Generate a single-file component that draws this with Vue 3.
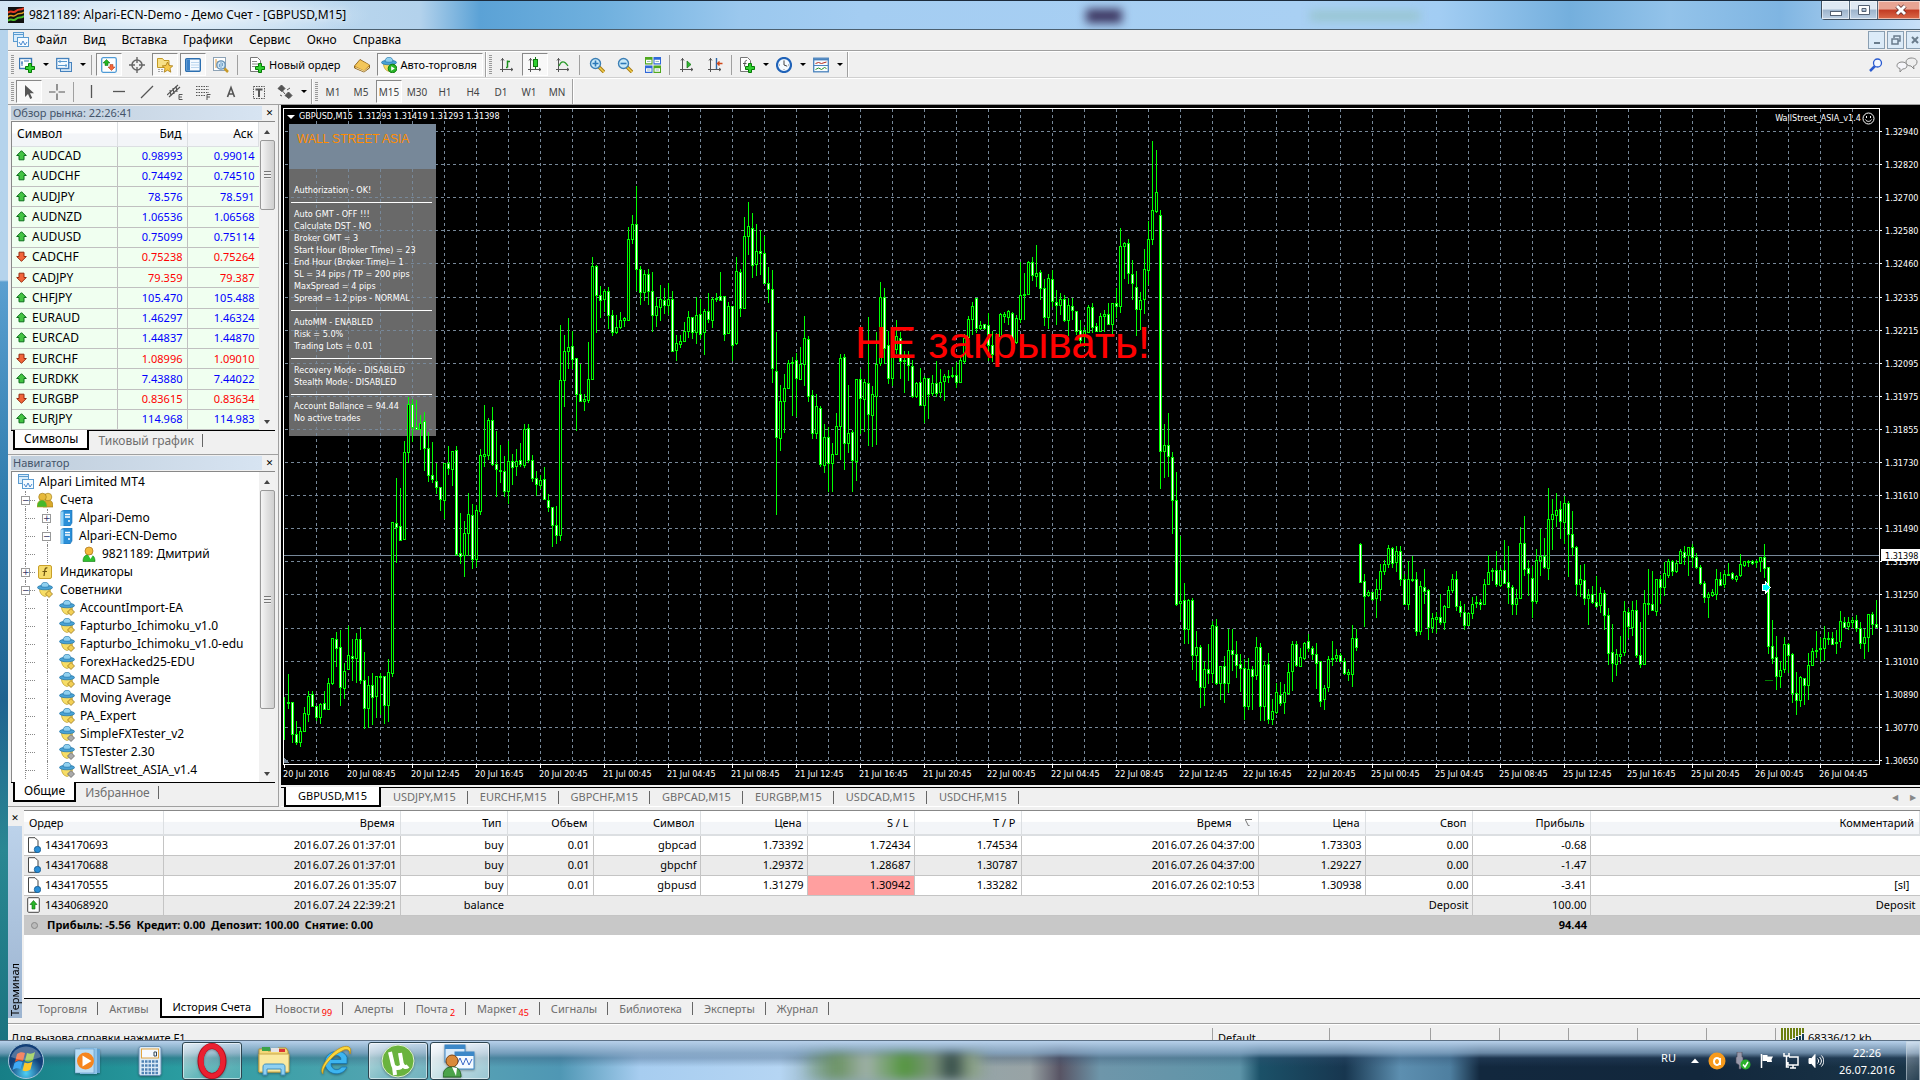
<script setup>
const menu = ['Файл', 'Вид', 'Вставка', 'Графики', 'Сервис', 'Окно', 'Справка']

const plus = '<path d="M9.500 6.500h3v3h3v3h-3v3h-3v-3h-3v-3h3z" fill="#2fd02f" stroke="#067a06"/>'
const axes = '<path d="M3.500 1v14M1 12.500h13M2 3.500l1.500-2 1.500 2M12 11l2 1.500-2 1.500" fill="none" stroke="#555"/>'
const lens = '<path d="M10 10l5 5" stroke="#a87b12" stroke-width="3.500"/><path d="M10 10l5 5" stroke="#f2cf4e" stroke-width="1.500"/><circle cx="6.500" cy="6.500" r="5" fill="#c9e9f8" stroke="#3c7fb5" stroke-width="1.400"/>'
const sheet = '<path d="M1.500.5h7l3 3v11h-10z" fill="#fff" stroke="#777"/>'
const hat = '<path d="M2.500 6.500c0 4.500 2 7 5.500 8 3.500-1 5.500-3.500 5.500-8z" fill="#f7dd66" stroke="#b99a28" stroke-width=".7"/><ellipse cx="8" cy="5.500" rx="7.600" ry="2.300" fill="#4aa3d6" stroke="#2374a8" stroke-width=".7"/><path d="M4 4.500C4-1.200 12-1.200 12 4.500c-2 1-6 1-8 0z" fill="#8fd0f0" stroke="#2374a8" stroke-width=".7"/>'
const icons = {
  app: '<rect width="16" height="16" fill="#111"/><path d="M0 6c3-4 5 1 8-2s5 0 8-3" stroke="#e33a22" stroke-width="2" fill="none"/><path d="M0 10c3-4 5 1 8-2s5 0 8-3" stroke="#d99b20" stroke-width="1.500" fill="none"/><path d="M0 14c3-4 5 1 8-2s5 0 8-3" stroke="#4cbf2a" stroke-width="2" fill="none"/>',
  charts: '<rect x=".5" y=".5" width="10" height="9" fill="#d8ecfb" stroke="#5b9bd0"/><path d="M0 2.500h11" stroke="#5b9bd0"/><rect x="4.500" y="5.500" width="11" height="9" fill="#f6fbff" stroke="#5b9bd0"/><path d="M6 10l2 3 2-4 2 4 2-3" stroke="#4a8ad0" fill="none"/>',
  newChart: '<rect x=".5" y="1.500" width="12" height="10" fill="#fff" stroke="#3c78b4" stroke-width="1.400"/><path d="M3 4v5M2 6h2M5 4h5" stroke="#3c78b4"/>' + plus,
  profiles: '<rect x="4.500" y="5.500" width="11" height="9" fill="#cfe4f6" stroke="#4682bd"/><rect x=".7" y="1.500" width="12" height="10" fill="#f4faff" stroke="#4682bd" stroke-width="1.300"/><path d="M2 4.500h9M2 8.500h9M4 3v3M10 7v3" stroke="#5b9bd0"/>',
  market: '<rect x=".7" y=".7" width="14.600" height="14.600" rx="1.500" fill="#fff" stroke="#4f9bd6" stroke-width="1.300"/><path d="M5.500 2.500l3.500 3.500H7v2.500H4V6H2z" fill="#25b525" stroke="#0b6b0b" stroke-width=".5"/><path d="M10.500 13.500L7 10h2V7.500h3V10h2z" fill="#f4683a" stroke="#a53214" stroke-width=".5"/>',
  cross: '<circle cx="8" cy="8" r="5" fill="none" stroke="#666" stroke-width="1.500"/><path d="M8 0v6M8 10v6M0 8h6M10 8h6" stroke="#666" stroke-width="1.400"/>',
  folder: '<path d="M.5 1.500h5l1.500 2h5v7H.5z" fill="#f7e087" stroke="#c39a25"/><path d="M2 12v3M5 12v3" stroke="#555" stroke-dasharray="1 1"/><path d="M10.500 5l1.600 3.500 3.700.4-2.800 2.500.8 3.800-3.300-2-3.300 2 .8-3.800-2.800-2.500 3.700-.4z" fill="#f7c94b" stroke="#a87b12" stroke-width=".8"/>',
  terminal: '<rect x=".7" y="1.700" width="14.600" height="12.600" rx="1" fill="#f4faff" stroke="#2c6fb0" stroke-width="1.400"/><rect x="1.400" y="2.400" width="3.600" height="11.200" fill="#3c82c8"/><path d="M6 5.500h8M6 8h8M6 10.500h8" stroke="#bbd6ee"/>',
  tester: '<rect x=".5" y=".5" width="12" height="13" fill="#fff" stroke="#8da2b5"/><path d="M3 2v9M5 4v6" stroke="#e09a3a"/><path d="M11 11l4 4" stroke="#c89a28" stroke-width="2.500"/><circle cx="8" cy="8" r="4.200" fill="#cfe6f7" stroke="#6590b5" stroke-width="1.300"/><path d="M8 5v6M6.500 7v3M9.500 6v3" stroke="#7aa6c9"/>',
  order: sheet + '<path d="M3 4.500h5M3 7h6M3 9.500h3" stroke="#888"/>' + plus,
  editor: '<path d="M.5 9L6 2.500 15.500 8v3L10 15 .5 11z" fill="#b9811b" stroke="#80540a" stroke-width=".8"/><path d="M1 9L6 3l9.300 5L10 13.500z" fill="#f3c65a"/><path d="M1.500 10.500l8.500 3.800 5-4.300" stroke="#fff5cf" fill="none" stroke-width=".8"/>',
  auto: hat + '<circle cx="11.500" cy="11.500" r="4.300" fill="#28b428" stroke="#0d7a0d"/><path d="M10.200 9.200v4.600l3.600-2.300z" fill="#fff"/>',
  bars: axes + '<path d="M7 10.500h1.500M8.500 10.500V3.500M8.500 4.500H11" stroke="#1b8f1b" stroke-width="1.500" fill="none"/>',
  candle: axes + '<path d="M8.500 0v12" stroke="#107810"/><rect x="6.500" y="2.500" width="4" height="7" fill="#2fce2f" stroke="#107810"/>',
  line: axes + '<path d="M4 9c2-5 5-6 9 0" stroke="#2a9a2a" stroke-width="1.300" fill="none"/>',
  zoomIn: lens + '<path d="M3.500 6.500h6M6.500 3.500v6" stroke="#2b78b8" stroke-width="1.600"/>',
  zoomOut: lens + '<path d="M3.500 6.500h6" stroke="#2b78b8" stroke-width="1.600"/>',
  tile: '<rect width="7.500" height="7.500" fill="#4fa81e"/><rect x="8.500" width="7.500" height="7.500" fill="#2f68d8"/><rect y="8.500" width="7.500" height="7.500" fill="#2f68d8"/><rect x="8.500" y="8.500" width="7.500" height="7.500" fill="#4fa81e"/><path d="M1 4.500h5.500M9.500 4.500H15M1 13h5.500M9.500 13H15" stroke="#fff" stroke-width="3.500"/><path d="M2 4.500h3.500M10.500 4.500H14M2 13h3.500M10.500 13H14" stroke="#9bb"/>',
  scroll: axes + '<path d="M8 4v7l4-3.500z" fill="#2fb82f" stroke="#147014" stroke-width=".7"/>',
  shift: axes + '<path d="M9.500 1v11" stroke="#2c66a8" stroke-width="1.400"/><path d="M15.500 6.500h-5M12.500 4.500l-2 2 2 2" stroke="#d04818" stroke-width="1.400" fill="none"/>',
  indicator: sheet + '<path d="M8 3.500c-2-.5-2 1-2.500 6M4 6.500h3.500" stroke="#555" fill="none"/>' + plus,
  clock: '<circle cx="8" cy="8" r="7" fill="#f4faff" stroke="#1f62b8" stroke-width="2.200"/><path d="M8 3.800V8l3.200 1.200" stroke="#444" fill="none"/><path d="M8 2.800v1M8 12v1M3 8h1M12 8h1" stroke="#888"/>',
  template: '<rect x=".7" y="1.200" width="14.600" height="13.600" fill="#f8fcff" stroke="#4a83bd" stroke-width="1.300"/><path d="M1 2.500h14" stroke="#4a83bd" stroke-width="1.800"/><path d="M1 8.500h14" stroke="#4a83bd"/><path d="M2.500 6.500l3-1 3 1 5-1.500" stroke="#b52c1c" fill="none"/><path d="M2.500 12.500l3-1.500 3 1.500 3-2 2 1" stroke="#2a922a" fill="none"/>',
  cursor: '<path d="M4 1v12l3-3 2.200 5 2-1-2.200-4.700h4z" fill="#555"/>',
  crosshair: '<path d="M8 0v6.500M8 9.500V16M0 8h6.500M9.500 8H16" stroke="#555" stroke-width="1.200"/>',
  vline: '<path d="M8.500 1v13" stroke="#555" stroke-width="1.300"/>',
  hline: '<path d="M2 7.500h12" stroke="#555" stroke-width="1.300"/>',
  trend: '<path d="M2 14L14 2" stroke="#555" stroke-width="1.300"/>',
  channel: '<path d="M0 11L11 1M2 13L13 3M3 6l1 6M6 4l1 6M9 2l1 6" stroke="#555" stroke-width="1.200"/><path d="M15.500 10.500H12v5h3.500M12 13h3" stroke="#555" fill="none"/>',
  fibo: '<path d="M1 2.500h13M1 5.500h13M1 8.500h13M1 11.500h9" stroke="#555" stroke-dasharray="1.500 1"/><path d="M15.500 10.500H12V16M12 13h3" stroke="#555" fill="none"/>',
  text: '<path d="M4.500 13L8 3.500l3.500 9.500M5.500 10h5" stroke="#555" stroke-width="1.600" fill="none"/>',
  label: '<rect x="2.500" y="2.500" width="11" height="12" fill="none" stroke="#555" stroke-dasharray="1.500 1"/><path d="M4.500 5.500h7M8 5.500V13" stroke="#555" stroke-width="2"/>',
  shapes: '<path d="M4.500 1L8 4.500l-3 3L1 4.500zM3 4l5 6M11.500 8l3.500 3.500-3 3L8 11.500z" fill="#555" stroke="#555"/><path d="M10 6l3-2M3 11l2 1" stroke="#555"/>',
  search: '<path d="M7 9l-5 5" stroke="#2a5bd0" stroke-width="2.500"/><circle cx="9.500" cy="6" r="4" fill="#f4f8ff" stroke="#2a5bd0" stroke-width="1.300"/>',
  chat: '<path d="M15 1c4 0 6 1.600 6 4s-2 4-3.500 4l.5 3-3-3c-3.500 0-5-2-5-4s2-4 5-4z" fill="#eee" stroke="#888"/><path d="M6 5c3 0 5 1.500 5 3.700S9 12 6.500 12L4 15v-3.500C2 11 1 10 1 8.700 1 6.500 3 5 6 5z" fill="#f6f6fa" stroke="#888"/>',
  up: '<path d="M5.500.7l4.800 4.800H8v4.300H3V5.500H.7z" fill="#43c443" stroke="#0c6e1c"/>',
  down: '<path d="M5.500 10.300L.7 5.500H3V1.200h5v4.300h2.300z" fill="#f2663a" stroke="#962a10"/>',
  accounts: '<path d="M6 15c0-4 1-7 5-7s5 3 5 7z" fill="#d9a92a" stroke="#9b7310" stroke-width=".6"/><circle cx="11" cy="5" r="3.800" fill="#f0cb55" stroke="#9b7310" stroke-width=".6"/><circle cx="5.500" cy="5" r="3.800" fill="#e6b93a" stroke="#9b7310" stroke-width=".6"/><path d="M0 15c0-4 2-7 5-7s5 3 5 7z" fill="#46b82a" stroke="#c49a20" stroke-width=".6"/>',
  server: '<path d="M3 1.500L6 0h8v13l-2 3H3z" fill="#2b8fd8" stroke="#1a6cb0" stroke-width=".6"/><path d="M3 1.500h2.500V16H3z" fill="#8ed1f8"/><path d="M7 4.500h5M7 7h5" stroke="#fff" stroke-width="1.300"/><circle cx="11" cy="11" r="1" fill="#fff"/>',
  user: '<path d="M2 15.500C2 11 4 8.500 8 8.500s6 2.500 6 7z" fill="#2fc02f" stroke="#0c7a0c" stroke-width=".6"/><path d="M7 8.500l2.500 4.500L12 9z" fill="#fff"/><circle cx="8" cy="5" r="4" fill="#f3b93c" stroke="#a8701a" stroke-width=".7"/>',
  func: '<rect x="1.500" y="1.500" width="13" height="13" rx="1.500" fill="#f6dc6d" stroke="#c9a02a"/><path d="M10.500 4c-3-1-2.500 2-3.500 8M5.500 7.500H10" stroke="#6b5210" stroke-width="1.200" fill="none"/>',
  expert: hat + '<path d="M12 8.500l3.500 3.500-3.500 3.500L8.500 12z" fill="#f3cf55" stroke="#98761a" stroke-width=".8"/>',
  expertOff: hat + '<path d="M12 8.500l3.500 3.500-3.500 3.500L8.500 12z" fill="#aaa" stroke="#666" stroke-width=".8"/>',
  deal: '<path d="M1.500.7h6.500l3 3v11.600H1.500z" fill="#fff" stroke="#444"/><circle cx="10.500" cy="12.500" r="3.200" fill="#2a8fd8" stroke="#14588c" stroke-width=".8"/>',
  deposit: '<rect x=".7" y=".7" width="11.600" height="14.600" rx="1" fill="#fff" stroke="#444"/><path d="M6.500 3.500L10 7.500H8v4.500H5V7.500H3z" fill="#2ab52a" stroke="#0b6b0b" stroke-width=".6"/>',
}

const tools = [
  { k: 'newChart', d: 1 }, { k: 'profiles', d: 1 }, { sep: 1 },
  { k: 'market', on: 1 }, { k: 'cross' }, { k: 'folder', on: 1 }, { k: 'terminal', on: 1 }, { k: 'tester' }, { sep: 1 },
  { k: 'order', t: 'Новый ордер' }, { k: 'editor' }, { k: 'auto', t: 'Авто-торговля', on: 1 }, { grip: 1 },
  { k: 'bars' }, { k: 'candle', on: 1 }, { k: 'line' }, { sep: 1 },
  { k: 'zoomIn' }, { k: 'zoomOut' }, { k: 'tile' }, { sep: 1 },
  { k: 'scroll' }, { k: 'shift' }, { sep: 1 },
  { k: 'indicator', d: 1 }, { k: 'clock', d: 1 }, { k: 'template', d: 1 },
]
const drawTools = [
  { k: 'cursor', on: 1 }, { k: 'crosshair' }, { sep: 1 }, { k: 'vline' }, { k: 'hline' }, { k: 'trend' }, { k: 'channel' },
  { k: 'fibo' }, { k: 'text' }, { k: 'label' }, { k: 'shapes', d: 1 }, { grip: 1 },
]
const frames = ['M1', 'M5', 'M15', 'M30', 'H1', 'H4', 'D1', 'W1', 'MN']

const quotes = `AUDCAD 0.98993 0.99014 u;AUDCHF 0.74492 0.74510 u;AUDJPY 78.576 78.591 u;AUDNZD 1.06536 1.06568 u;AUDUSD 0.75099 0.75114 u;CADCHF 0.75238 0.75264 d;CADJPY 79.359 79.387 d;CHFJPY 105.470 105.488 u;EURAUD 1.46297 1.46324 u;EURCAD 1.44837 1.44870 u;EURCHF 1.08996 1.09010 d;EURDKK 7.43880 7.44022 u;EURGBP 0.83615 0.83634 d;EURJPY 114.968 114.983 u`
  .split(';').map((r) => { const [s, bid, ask, dir] = r.split(' '); return { s, bid, ask, up: dir === 'u' } })

const tree = [
  { l: 0, k: 'charts', t: 'Alpari Limited MT4' },
  { l: 1, k: 'accounts', t: 'Счета', b: '−' },
  { l: 2, k: 'server', t: 'Alpari-Demo', b: '+' },
  { l: 2, k: 'server', t: 'Alpari-ECN-Demo', b: '−' },
  { l: 3, k: 'user', t: '9821189: Дмитрий' },
  { l: 1, k: 'func', t: 'Индикаторы', b: '+' },
  { l: 1, k: 'expert', t: 'Советники', b: '−' },
  ...['AccountImport-EA', 'Fapturbo_Ichimoku_v1.0', 'Fapturbo_Ichimoku_v1.0-edu', 'ForexHacked25-EDU', 'MACD Sample', 'Moving Average', 'PA_Expert']
    .map((t) => ({ l: 2, k: 'expert', t })),
  ...['SimpleFXTester_v2', 'TSTester 2.30', 'WallStreet_ASIA_v1.4'].map((t) => ({ l: 2, k: 'expertOff', t })),
]

// Bars are "high,bodyTop,bodyBottom,low"; a trailing "-" marks a falling bar.
const lastWeek = `1357,1373,1426,1451 1304,1367,1371,1382 1367,1367,1440,1459- 1412,1441,1459,1464- 1424,1435,1459,1469 1380,1393,1433,1433 1342,1355,1395,1412 1342,1351,1377,1378- 1378,1378,1403,1410- 1371,1373,1402,1415 1342,1370,1385,1385- 1313,1325,1384,1384 1223,1223,1326,1328 1208,1225,1246,1286- 1204,1244,1335,1374- 1280,1298,1337,1360 1196,1262,1292,1292 1225,1264,1267,1317- 1212,1224,1267,1322 1198,1226,1319,1325- 1254,1319,1382,1428- 1310,1330,1381,1425 1302,1329,1356,1419- 1309,1309,1355,1403 1303,1309,1310,1395 1309,1309,1375,1415- 1270,1301,1374,1412 960,960,1303,1310 860,961,971,1050- 882,968,999,1001- 775,801,998,998 676,690,801,822 680,690,742,776- 682,742,748,748- 716,733,748,793 710,730,790,840- 755,790,852,865- 778,853,862,869- 826,865,880,893- 880,880,907,932- 826,826,908,950 786,826,836,851- 797,797,839,876 786,796,1032,1034- 938,1030,1037,1052- 957,985,1035,1082 893,941,985,1033 918,943,1044,1063- 921,932,1043,1058 793,807,933,940 694,805,808,832 723,727,806,816 698,727,828,830- 752,827,839,900- 785,840,844,869- 809,842,888,899- 775,821,888,916 804,821,833,872- 793,820,832,852 779,817,828,832- 736,748,829,833 737,746,818,822- 807,817,860,866- 842,860,872,897- 852,863,874,881 834,862,907,907- 895,908,925,935- 925,926,965,1014- 922,965,988,1006- 511,637,988,1000 535,571,637,695 495,561,571,608 525,560,588,608- 587,587,667,751- 600,667,684,685- 668,680,683,704 550,635,681,686 357,378,633,633 376,378,444,528- 423,444,454,492- 429,435,453,480 424,435,488,519- 478,489,528,533- 489,515,528,530 481,500,515,519 492,496,499,513 289,316,499,499 262,281,316,324 195,281,384,432- 377,384,437,463- 386,396,437,455 384,396,435,464- 391,434,489,524- 448,468,489,514 420,452,470,499 427,454,465,484- 415,452,466,487 434,452,570,570- 534,552,568,591 535,547,555,562 504,524,547,548 480,494,524,539 494,494,527,540- 448,489,528,552 453,487,532,541- 475,479,527,578 439,480,498,505- 447,453,499,516 438,449,452,457 391,446,455,455- 446,446,531,546- 460,467,530,530 467,467,556,591- 357,389,553,555 384,390,473,490- 266,308,473,473 232,287,308,350 257,290,374,403- 282,344,373,397 296,343,347,395- 309,348,417,417- 380,416,430,458- 387,430,610,640- 527,615,766,941- 647,683,767,795 623,655,683,755 590,597,655,655 584,595,598,715 576,590,632,719- 561,600,634,634 491,541,601,647 537,542,673,684- 659,671,757,767- 667,696,757,767 695,700,828,832-
736,766,830,845 743,766,824,888- 780,805,825,888 711,740,805,805 577,587,740,815 577,583,780,838- 648,757,780,801 750,755,818,888- 634,635,820,864 611,633,678,757- 635,640,680,752 493,642,714,783- 650,669,716,786 528,600,672,782 414,448,598,602 427,448,563,598- 526,557,632,642- 566,566,632,648 500,537,566,575 528,540,593,632- 570,590,592,664 570,585,603,636- 590,604,672,675- 641,643,672,676 608,641,692,692- 627,632,692,732 632,632,667,722- 625,644,666,670 594,643,665,672- 611,640,663,674 623,628,638,682 614,627,630,641 606,626,628,630 595,626,640,652- 585,590,640,641 531,540,592,597 491,497,539,545 459,468,498,532 450,450,517,528- 502,511,518,520 509,510,518,520- 485,512,557,590- 525,557,578,592- 530,536,580,590 485,486,536,540 482,487,490,505 478,480,492,508 482,485,548,552- 489,495,550,552 368,444,497,505 393,440,443,497 366,368,440,440 357,368,398,408- 330,394,399,422 386,392,428,452- 407,428,494,512- 395,405,493,517 387,407,457,467- 432,458,465,510- 439,452,465,487 444,452,500,502- 451,466,500,533 451,468,478,498- 479,480,524,532- 500,523,546,552- 515,524,535,560 465,471,527,528 462,470,515,527- 507,514,524,525- 485,490,524,524 477,486,490,524 461,487,508,509- 461,462,508,533 427,461,467,492- 290,332,468,482 323,325,332,404 315,325,394,415- 363,396,416,452- 389,424,476,533- 436,455,476,520 339,384,452,483 276,315,387,419 94,250,315,327 114,210,252,254 250,262,798,881- 736,784,797,856 711,784,810,854- 800,811,908,985- 845,908,1146,1147- 991,1138,1144,1180 1097,1137,1202,1235- 1135,1137,1202,1233 1132,1137,1262,1292- 1207,1242,1262,1317 1238,1242,1335,1379- 1276,1292,1335,1375 1236,1294,1302,1325- 1185,1192,1303,1322 1179,1196,1325,1327- 1286,1287,1325,1362 1264,1287,1326,1369- 1203,1249,1326,1345 1202,1249,1260,1296- 1229,1259,1283,1312- 1260,1282,1290,1342- 1270,1291,1378,1407- 1267,1294,1378,1384 1287,1293,1309,1384- 1220,1243,1306,1315 1234,1242,1378,1409- 1275,1283,1378,1409 1257,1282,1406,1416- 1362,1389,1406,1419 1325,1346,1390,1392 1323,1352,1371,1374- 1327,1346,1369,1393 1279,1299,1347,1350 1229,1236,1297,1340 1229,1236,1285,1287- 1246,1266,1286,1287 1232,1234,1267,1270 1213,1230,1246,1253- 1240,1246,1260,1270- 1235,1260,1280,1337- 1276,1276,1365,1377- 1329,1336,1362,1384 1263,1271,1333,1342 1230,1268,1271,1284 1248,1262,1268,1275 1256,1262,1274,1275- 1267,1275,1303,1305- 1294,1301,1304,1318 1193,1223,1305,1332 1202,1223,1242,1250-`
const thisWeek = `250,252,365,365- 343,362,407,497- 390,396,404,408 397,397,418,419- 357,388,413,470 311,332,388,420 300,312,332,343 254,265,313,322 261,265,308,320- 257,273,307,333 257,273,357,376- 343,356,431,431- 303,357,431,447 288,356,359,363- 336,357,512,525- 363,378,512,522 327,380,392,430- 388,390,500,537- 460,475,500,516 457,472,478,516 402,471,486,493- 436,438,487,507 379,391,440,441 342,357,391,397 334,357,438,451- 422,438,457,468- 432,456,496,508- 457,458,495,495 411,432,460,473 409,427,430,440 417,427,431,447- 357,373,431,432 286,337,371,371 324,331,333,360 273,331,373,379- 325,330,375,378 241,330,368,370- 257,367,382,429- 375,382,432,461- 388,415,433,461 201,249,415,415 168,249,327,345- 300,325,338,406- 319,354,422,470- 268,300,424,430 208,289,300,345 234,287,322,324- 85,178,323,357 117,163,178,267 100,151,165,197 123,147,184,235- 108,129,187,249 123,129,222,348- 153,222,262,285- 257,262,371,406- 316,358,373,409 312,360,414,432- 388,405,415,492 379,402,427,430- 348,427,437,440- 381,399,436,457 390,400,466,508- 443,466,580,611- 493,577,610,662- 568,583,612,644 527,583,587,608 424,454,577,584 443,455,499,532- 424,451,500,525 421,451,586,591- 485,586,611,620- 391,430,611,611 328,429,431,461 334,431,449,450- 357,358,453,464 344,358,382,430- 307,340,382,406 297,304,346,350 300,304,334,345- 300,309,334,336 268,274,310,310 257,276,290,311- 261,262,285,345 252,262,292,319- 280,291,321,325- 315,322,370,371- 363,370,412,426- 397,403,411,470 388,396,406,409 327,358,401,416 337,358,374,376- 331,342,373,382 309,342,345,345- 337,340,353,358- 345,349,357,362 282,313,346,348 303,304,315,318 300,302,305,318 301,303,308,312- 300,303,307,322 292,292,304,333 252,291,324,350- 322,322,559,579- 480,558,593,608- 528,591,647,686- 604,629,649,681 531,552,628,637 548,552,586,635- 579,583,700,726- 636,700,720,762- 648,651,720,738 654,655,676,732- 579,614,676,717 564,574,616,616 513,569,574,591 534,564,568,604 498,534,565,600 516,534,537,553- 516,535,553,553- 510,546,549,579 453,484,542,561 471,487,500,502- 471,487,499,506 471,481,487,501 465,481,505,513- 486,505,550,565- 506,532,550,594 462,463,532,573 456,462,493,522- 420,492,501,502-`
const scaleBars = (src, top, perPx) => src.trim().split(/\s+/).map((b) => {
  const y = b.replace('-', '').split(',').map((v) => Math.round(top + v / perPx))
  return { y, down: b.endsWith('-') }
})
const bars = [...scaleBars(lastWeek, -9, 2.2725), ...scaleBars(thisWeek, 351, 3)]
const wicks = bars.map(({ y }, i) => `M${i * 4}.5 ${y[0]}V${y[3] + 1}`).join('')
const body = ({ y }, i) => `M${i * 4 - 1}.5 ${y[1]}.5h2V${Math.max(y[2], y[1] + 1)}.5h-2z`
const rising = bars.map((b, i) => (b.down ? '' : body(b, i))).join('')
const falling = bars.map((b, i) => (b.down ? body(b, i) : '')).join('')

const rowsY = Array.from({ length: 20 }, (_, i) => Math.round(22 + i * 33.1))
const colsX = Array.from({ length: 80 }, (_, i) => 32 + i * 32)
const prices = ['1.32940', '1.32820', '1.32700', '1.32580', '1.32460', '1.32335', '1.32215', '1.32095', '1.31975', '1.31855', '1.31730', '1.31610', '1.31490', '1.31370', '1.31250', '1.31130', '1.31010', '1.30890', '1.30770', '1.30650']
const hours = ['00:45', '04:45', '08:45', '12:45', '16:45', '20:45']
const times = [
  '20 Jul 2016', ...hours.slice(2).map((h) => '20 Jul ' + h),
  ...['21', '22', '25'].flatMap((d) => hours.map((h) => `${d} Jul ${h}`)),
  '26 Jul 00:45', '26 Jul 04:45',
]
const info = ['Authorization - OK!', '', 'Auto GMT - OFF !!!', 'Calculate DST - NO', 'Broker GMT = 3', 'Start Hour (Broker Time) = 23', 'End Hour (Broker Time)= 1', 'SL = 34 pips / TP = 200 pips', 'MaxSpread = 4 pips', 'Spread = 1.2 pips - NORMAL', '', 'AutoMM - ENABLED', 'Risk = 5.0%', 'Trading Lots = 0.01', '', 'Recovery Mode - DISABLED', 'Stealth Mode - DISABLED', '', 'Account Ballance = 94.44', 'No active trades']
const chartTabs = ['GBPUSD', 'USDJPY', 'EURCHF', 'GBPCHF', 'GBPCAD', 'EURGBP', 'USDCAD', 'USDCHF']

const heads = ['Ордер', 'Время', 'Тип', 'Объем', 'Символ', 'Цена', 'S / L', 'T / P', 'Время', 'Цена', 'Своп', 'Прибыль', 'Комментарий']
const orders = [
  ['1434170693', '2016.07.26 01:37:01', 'buy', '0.01', 'gbpcad', '1.73392', '1.72434', '1.74534', '2016.07.26 04:37:00', '1.73303', '0.00', '-0.68', ''],
  ['1434170688', '2016.07.26 01:37:01', 'buy', '0.01', 'gbpchf', '1.29372', '1.28687', '1.30787', '2016.07.26 04:37:00', '1.29227', '0.00', '-1.47', ''],
  ['1434170555', '2016.07.26 01:35:07', 'buy', '0.01', 'gbpusd', '1.31279', '1.30942', '1.33282', '2016.07.26 02:10:53', '1.30938', '0.00', '-3.41', '[sl]'],
]
const termTabs = [
  { t: 'Торговля' }, { t: 'Активы', last: 1 }, { t: 'История Счета', on: 1 }, { t: 'Новости', n: 99 }, { t: 'Алерты' }, { t: 'Почта', n: 2 },
  { t: 'Маркет', n: 45 }, { t: 'Сигналы' }, { t: 'Библиотека' }, { t: 'Эксперты' }, { t: 'Журнал' },
]
</script>

<template>
  <div class="screen">
    <header class="title">
      <svg class="ico" viewBox="0 0 16 16" v-html="icons.app" />
      <span class="title-text">9821189: Alpari-ECN-Demo - Демо Счет - [GBPUSD,M15]</span>
      <i class="smudge dark" /><i class="smudge green" />
      <div class="winbtns">
        <button aria-label="Свернуть"><svg width="12" height="14"><rect x=".5" y="8.500" width="11" height="4" fill="#fff" stroke="#546173" /></svg></button>
        <button aria-label="Развернуть"><svg width="12" height="12"><path d="M.5 1.500h11v9H.5zM4 4.500h4v3H4z" fill="#fff" fill-rule="evenodd" stroke="#546173" /></svg></button>
        <button class="close" aria-label="Закрыть"><svg width="12" height="12"><path d="M2 2l8 8M10 2l-8 8" stroke="#5a2a2a" stroke-width="4.500" /><path d="M2 2l8 8M10 2l-8 8" stroke="#fff" stroke-width="3" /></svg></button>
      </div>
    </header>

    <div class="window">
      <nav class="menu">
        <svg class="ico" viewBox="0 0 16 16" v-html="icons.charts" />
        <button v-for="m in menu" :key="m">{{ m }}</button>
        <div class="mdi">
          <button aria-label="Свернуть окно"><svg width="10" height="10"><path d="M2 8h6" stroke="#6a7c8c" stroke-width="2" /></svg></button>
          <button aria-label="Восстановить окно"><svg width="10" height="10"><path d="M3 3V1h6v5H7M1 4h6v5H1z" fill="none" stroke="#6a7c8c" stroke-width="1.500" /></svg></button>
          <button aria-label="Закрыть окно"><svg width="10" height="10"><path d="M2 2l6 6M8 2L2 8" stroke="#6a7c8c" stroke-width="2" /></svg></button>
        </div>
      </nav>

      <div class="toolbar">
        <i class="grip" />
        <template v-for="(b, i) in tools" :key="i">
          <i v-if="b.sep" class="sep" />
          <template v-else-if="b.grip"><i class="edge" /><i class="grip" /></template>
          <button v-else class="tool" :class="{ on: b.on, drop: b.d, wide: b.t }">
            <svg class="ico" viewBox="0 0 16 16" v-html="icons[b.k]" /><span v-if="b.t">{{ b.t }}</span>
          </button>
        </template>
        <i class="edge" />
        <div class="right">
          <svg class="ico" viewBox="0 0 16 16" v-html="icons.search" />
          <svg class="chat" viewBox="0 0 22 16" v-html="icons.chat" />
        </div>
      </div>
      <div class="toolbar second">
        <i class="grip" />
        <template v-for="(b, i) in drawTools" :key="i">
          <i v-if="b.sep" class="sep" />
          <template v-else-if="b.grip"><i class="edge" /><i class="grip" /></template>
          <button v-else class="tool" :class="{ on: b.on, drop: b.d }"><svg class="ico" viewBox="0 0 16 16" v-html="icons[b.k]" /></button>
        </template>
        <button v-for="f in frames" :key="f" class="tool frame" :class="{ on: f === 'M15' }">{{ f }}</button>
        <i class="edge" />
      </div>

      <main class="main">
        <aside class="dock">
          <section class="pane quotes">
            <div class="caption"><h2>Обзор рынка: 22:26:41</h2><button aria-label="Закрыть обзор рынка">✕</button></div>
            <div class="box">
              <table>
                <thead><tr><th>Символ</th><th>Бид</th><th>Аск</th></tr></thead>
                <tbody>
                  <tr v-for="q in quotes" :key="q.s" :class="{ down: !q.up }">
                    <td><svg class="dir" viewBox="0 0 11 11" v-html="q.up ? icons.up : icons.down" />{{ q.s }}</td>
                    <td>{{ q.bid }}</td><td>{{ q.ask }}</td>
                  </tr>
                </tbody>
              </table>
              <div class="scroll"><i class="thumb" /></div>
            </div>
            <div class="tabs"><button class="on">Символы</button><button>Тиковый график</button></div>
          </section>
          <section class="pane nav">
            <div class="caption"><h2>Навигатор</h2><button aria-label="Закрыть навигатор">✕</button></div>
            <div class="box">
              <ul>
                <li v-for="n in tree" :key="n.t" :class="['l' + n.l]">
                  <i v-if="n.b" class="pm">{{ n.b }}</i><svg class="ico" viewBox="0 0 16 16" v-html="icons[n.k]" /><span>{{ n.t }}</span>
                </li>
              </ul>
              <div class="scroll"><i class="thumb long" /></div>
            </div>
            <div class="tabs"><button class="on">Общие</button><button>Избранное</button></div>
          </section>
        </aside>

        <section class="charts">
          <div class="chart">
            <div class="plot">
              <svg class="canvas" shape-rendering="crispEdges">
                <rect x="5" y="15" width="147" height="312" fill="#696969" />
                <g stroke="#778899" stroke-dasharray="3 3">
                  <line v-for="y in rowsY" :key="'h' + y" x1="1" :y1="y + 0.5" x2="100%" :y2="y + 0.5" />
                  <line v-for="x in colsX" :key="'v' + x" :x1="x + 0.5" y1="0" :x2="x + 0.5" y2="100%" />
                </g>
                <line x1="0" y1="446.500" x2="100%" y2="446.500" stroke="#778899" />
                <rect x="5" y="15" width="147" height="45" fill="#778899" />
                <path d="M0 648l5 6H0z" fill="#778899" />
                <path :d="wicks" stroke="#0f0" />
                <path :d="rising" fill="#000" stroke="#0f0" />
                <path :d="falling" fill="#fff" stroke="#0f0" />
                <path d="M1481 571.500h8" stroke="#008000" />
                <path d="M1478.500 475.500h3v-3l5 6-5 6v-3h-3z" fill="#0ff" stroke="#fff" />
              </svg>
              <p class="quote"><i />GBPUSD,M15&nbsp; 1.31293 1.31419 1.31293 1.31398</p>
              <p class="ea">WallStreet_ASIA_v1.4
                <svg width="13" height="13" viewBox="0 0 13 13" fill="none" stroke="#fff"><circle cx="6.500" cy="6.500" r="5.500" /><path d="M4.500 4v2M8.500 4v2M3.500 7.500c1 2.500 5 2.500 6 0" /></svg>
              </p>
              <div class="info">
                <h3>WALL STREET ASIA</h3>
                <p v-for="(t, i) in info" :key="i" :class="{ rule: !t }">{{ t }}</p>
              </div>
              <p class="warning">НЕ закрывать!</p>
            </div>
            <svg class="prices">
              <template v-for="(p, i) in prices" :key="p">
                <path :d="`M0 ${rowsY[i] + 1}.5h2`" stroke="#fff" /><text x="5" :y="rowsY[i] + 5">{{ p }}</text>
              </template>
              <rect x="1" y="441" width="39" height="12" fill="#fff" /><text x="5" y="451" class="bid">1.31398</text>
            </svg>
            <svg class="times">
              <template v-for="(t, i) in times" :key="t">
                <path :d="`M${i * 64 + 1}.5 0v3`" stroke="#fff" /><text :x="i * 64" y="12">{{ t }}</text>
              </template>
            </svg>
          </div>
          <div class="tabs chart-tabs">
            <button v-for="(t, i) in chartTabs" :key="t" :class="{ on: !i }">{{ t }},M15</button>
            <div class="arrows"><i>◀</i><i>▶</i></div>
          </div>
        </section>
      </main>

      <section class="terminal">
        <div class="strip"><button aria-label="Закрыть терминал">✕</button><span>Терминал</span></div>
        <div class="term-body">
          <div class="term-list">
            <table>
              <colgroup><col v-for="(h, i) in heads" :key="i" :class="'c' + i"></colgroup>
              <thead><tr><th v-for="(h, i) in heads" :key="i">{{ h }}<svg v-if="i === 8" width="9" height="8" fill="none" stroke="#777"><path d="M1 .5h7M1.500 1l3 6 1-1" /></svg></th></tr></thead>
              <tbody>
                <tr v-for="(o, r) in orders" :key="o[0]">
                  <td v-for="(c, i) in o" :key="i" :class="{ hit: r === 2 && i === 6 }">
                    <svg v-if="!i" class="doc" viewBox="0 0 14 16" v-html="icons.deal" />{{ c }}
                  </td>
                </tr>
                <tr>
                  <td><svg class="doc" viewBox="0 0 14 16" v-html="icons.deposit" />1434068920</td>
                  <td>2016.07.24 22:39:21</td><td class="open">balance</td>
                  <td colspan="8">Deposit</td><td>100.00</td><td class="flush">Deposit</td>
                </tr>
                <tr class="sum">
                  <td colspan="11"><i />Прибыль: -5.56&nbsp; Кредит: 0.00&nbsp; Депозит: 100.00&nbsp; Снятие: 0.00</td><td>94.44</td><td />
                </tr>
              </tbody>
            </table>
          </div>
          <div class="tabs term-tabs">
            <button v-for="t in termTabs" :key="t.t" :class="{ on: t.on, last: t.last }">{{ t.t }}<sub v-if="t.n">{{ t.n }}</sub></button>
          </div>
        </div>
      </section>

      <footer class="status">
        <span class="help">Для вызова справки нажмите F1</span>
        <span class="w1">Default</span><span class="w2" /><span class="w3" /><span class="w3" /><span class="w3" /><span class="w3" /><span class="w3" />
        <span class="net">
          <svg width="24" height="14"><path d="M1 14V0M4 14V0M7 12V0M10 11V0M13 10V0M16 8V0M19 7V0M22 5V0" stroke="#6b7f10" stroke-width="2" /><path d="M7 14v-1M10 14v-2M13 14v-3M16 14V9M19 14V8M22 14V6" stroke="#123c5a" stroke-width="2" /></svg>68336/12 kb
        </span>
      </footer>
    </div>

    <footer class="taskbar">
      <button class="start" aria-label="Пуск">
        <svg width="38" height="38" viewBox="0 0 38 38"><defs><radialGradient id="orb" cy=".85"><stop offset="0" stop-color="#4fd0f5" /><stop offset="1" stop-color="#123f78" /></radialGradient></defs>
          <circle cx="19" cy="19" r="17.500" fill="url(#orb)" stroke="#a8c6dc" /><path d="M10 12c3-2 5-2 8-1l-2 8c-3-1-5-1-8 1z" fill="#f0592a" /><path d="M20 11c3 1 5 1 8-1l-2 8c-3 2-5 2-8 1z" fill="#8cc63f" /><path d="M7.500 21c3-2 5-2 8-1l-2 7c-3-1-5-1-8 1z" fill="#3fa9f5" /><path d="M17.500 20.500c3 1 5 1 8-1l-2 8c-3 2-5 2-8 1z" fill="#fcc82c" /><path d="M4 15c5-14 25-14 30 0-9 4-21 4-30 0z" fill="#fff" opacity=".28" /></svg>
      </button>
      <button class="task" aria-label="Проигрыватель"><svg width="26" height="28" viewBox="0 0 26 28"><path d="M9 2h16v24H9z" fill="#5f9fcf" /><path d="M5 1h17v26H5z" fill="#8fc3e8" /><path d="M0 2h19v24H0z" fill="#b9dcf4" stroke="#5b95c4" stroke-width=".6" /><circle cx="10.500" cy="14" r="8.500" fill="#f5851f" /><path d="M7.500 8.500v11l9-5.500z" fill="#fff" /></svg></button>
      <button class="task" aria-label="Калькулятор"><svg width="24" height="30" viewBox="0 0 24 30"><rect x="1" y=".5" width="22" height="29" rx="2" fill="#dcebf7" stroke="#6a93b8" /><rect x="3.500" y="3" width="17" height="9" fill="#f6faff" stroke="#e3a540" /><path d="M16 6v4h2.500V6z" fill="none" stroke="#345" /><path d="M3.500 15.500h17M3.500 19.500h17M3.500 23.500h17M3.500 27h17" stroke="#4f82b4" stroke-width="2.500" stroke-dasharray="2.500 1" /></svg></button>
      <button class="task run" aria-label="Opera"><svg width="32" height="36" viewBox="0 0 32 36"><ellipse cx="16" cy="18" rx="11.500" ry="15" fill="none" stroke="#b00a1c" stroke-width="6" /><ellipse cx="16" cy="18" rx="11" ry="15" fill="none" stroke="#ea2030" stroke-width="5" /></svg></button>
      <button class="task" aria-label="Проводник"><svg width="34" height="30" viewBox="0 0 34 30"><path d="M2 3h7l2 2h10V2h8l2 3v21H2z" fill="#f3d778" stroke="#b9943a" /><path d="M5 1h8v4H5z" fill="#3aa34a" /><path d="M14 2h8v4h-8z" fill="#e4e4e4" /><path d="M22 3h6v3h-6z" fill="#d33" /><path d="M2 8h30v18H2z" fill="#fae9a0" stroke="#c9a84a" /><path d="M6 29v-8c0-2 1-3 3-3h16c2 0 3 1 3 3v8h-4v-6H10v6z" fill="#8fd0f2" stroke="#3f8fc0" /></svg></button>
      <button class="task" aria-label="Internet Explorer"><svg width="34" height="32" viewBox="0 0 34 32"><path d="M28 18.500H12c0 7 8 8 10.500 3.500H28C23 33 6 30 6 17.500S25 2.500 28 12.500zM12 14.500h10c0-5.500-9.500-5.500-10 0z" fill="#3db5f0" stroke="#1673ad" stroke-width=".8" /><path d="M4 29C-3 23 20-3 30 2c2 1 2 4 1 7 0-4-3-6-8-3C12 11 3 23 4 29z" fill="#fbd63c" stroke="#c08c10" stroke-width=".7" /></svg></button>
      <button class="task run" aria-label="uTorrent"><svg width="34" height="34" viewBox="0 0 34 34"><circle cx="17" cy="17" r="16" fill="#6ab33e" stroke="#dff0d0" /><path d="M9 8l3 13c1 4 8 4 9 0l-2-12M21 20c1 3 4 4 6 2M13 23l1 8" fill="none" stroke="#fff" stroke-width="4" /></svg></button>
      <button class="task run active" aria-label="MetaTrader"><svg width="34" height="34" viewBox="0 0 34 34"><rect x="2" y="1" width="20" height="17" fill="#d8ebfa" stroke="#3c88c8" /><path d="M2 3h20" stroke="#3c88c8" stroke-width="4" /><rect x="12" y="8" width="19" height="17" fill="#f4faff" stroke="#3c88c8" /><path d="M12 10h19" stroke="#3c88c8" stroke-width="4" /><path d="M14 20l3-6 3 7 3-7 3 7 3-6" fill="none" stroke="#3a68c8" /><circle cx="9" cy="17" r="6" fill="#d98a3a" stroke="#7a4210" /><path d="M0 33c0-7 3-10 9-10s9 3 9 10z" fill="#4ba34a" stroke="#2a6a2a" /><path d="M9 23l4 9 1-8z" fill="#fff" /></svg></button>
      <i class="leaf" />
      <div class="tray">
        <span class="lang">RU</span>
        <svg width="8" height="5"><path d="M0 5l4-4.500L8 5z" fill="#fff" /></svg>
        <svg width="18" height="18" viewBox="0 0 18 18"><circle cx="9" cy="9" r="8.500" fill="#f79a1c" /><path d="M12 6v7M12 9.500a3 3.500 0 1 1 0-.1" fill="none" stroke="#fff" stroke-width="2" /></svg>
        <svg width="16" height="18" viewBox="0 0 16 18"><path d="M2 0h5v5h1v7l-2 2v3H4v-4l-3-2V5h1z" fill="#99a" stroke="#445" stroke-width=".6" /><circle cx="10.500" cy="12.500" r="5" fill="#2bb02b" /><path d="M8 12.500l2 2.500 3-5" stroke="#fff" fill="none" stroke-width="1.500" /></svg>
        <svg width="14" height="16" viewBox="0 0 14 16"><path d="M1.500 1v14" stroke="#fff" stroke-width="1.500" /><path d="M2.500 2h5v1.500H13l-1.500 3L12 9H7V8H2.500z" fill="#fff" /></svg>
        <svg width="16" height="16" viewBox="0 0 16 16" fill="none" stroke="#fff" stroke-width="1.500"><path d="M6 4h9v8H5V9M7 15h6M10 12v3M1 0v3h5V0M3.500 3v11H6" /></svg>
        <svg width="16" height="16" viewBox="0 0 16 16" fill="none" stroke="#fff"><path d="M1 5.500h2.500L7 1.500v13l-3.500-4H1z" fill="#fff" /><path d="M9.500 5.500c1.500 1.500 1.500 3.500 0 5M11.500 4c2.500 2.500 2.500 5.500 0 8M13.500 2.500c3 3.500 3 7.500 0 11" /></svg>
        <div class="clock"><span>22:26</span><span>26.07.2016</span></div>
        <button class="peek" aria-label="Показать рабочий стол" />
      </div>
    </footer>
  </div>
</template>

<style>
body { margin: 0; overflow: hidden; }
</style>

<style scoped>
* { box-sizing: border-box; }
.screen { display: flex; flex-direction: column; height: 100vh; overflow: hidden; font: 11px/14px "Noto Sans", sans-serif; color: #000; background: linear-gradient(#b5d3ec 0, #b5d3ec 280px, #5b9fd0 282px, #2f7cad 500px, #1f6390 700px, #2a8792 850px, #17707c 100%); }
button { font: inherit; color: inherit; border: 0; background: none; padding: 0; }
h2, h3, p, ul { margin: 0; padding: 0; font-weight: normal; }
i { font-style: normal; }
.ico { width: 16px; height: 16px; flex: none; }

.title { position: relative; flex: none; display: flex; align-items: center; gap: 5px; height: 30px; padding-left: 8px; overflow: hidden; border-top: 1px solid #1c2b3c; border-bottom: 1px solid #4c6070; font-size: 12px;
  background: radial-gradient(ellipse 200px 30px at 170px 14px, #eef6fc, #dcebf7aa 60%, transparent), linear-gradient(90deg, #cfe3f3 0, #b3d2ec 420px, #5ba2d6 480px, #6fb0de 600px, #9bc8ee 740px, #a4cdf2 860px, #a9d0f3 1300px, #a2cdf3 1440px, #74afdd 1570px, #93c3ea 1670px, #7fb5e2 1780px, #c8e0f8 1920px); }
.title-text { text-shadow: 0 0 6px #fff; }
.smudge { position: absolute; filter: blur(5px); }
.dark { left: 1086px; top: 8px; width: 36px; height: 14px; background: #3b3560; }
.green { left: 1310px; top: 10px; width: 110px; height: 10px; background: #98c5cf; }
.winbtns { align-self: flex-start; display: flex; margin-left: auto; border: 1px solid #3e4f60; border-top: 0; border-right: 0; border-radius: 0 0 0 4px; }
.winbtns button { display: grid; place-items: center; width: 28px; height: 18px; border-right: 1px solid #56697c; background: linear-gradient(#dfe9f3 45%, #9db3cb 50%, #bdd0e4); box-shadow: inset 0 0 0 1px #ffffff88; }
.winbtns .close { width: 42px; border: 0; padding-left: 4px; background: linear-gradient(#e8a493 45%, #c23a22 50%, #da6a4a); }

.window { flex: 1; min-height: 0; display: flex; flex-direction: column; margin-left: 8px; background: #f0f0f0; }
.menu { flex: none; display: flex; align-items: center; height: 21px; padding-left: 5px; border-bottom: 1px solid #a0a0a0; font-size: 12px; }
.menu > button { margin-left: 16px; }
.menu > .ico + button { margin-left: 7px; }
.mdi { display: flex; gap: 2px; margin: 0 -3px 0 auto; }
.mdi button { display: grid; place-items: center; width: 17px; height: 18px; border: 1px solid #8a9fb2; background: #dcebf8; }

.toolbar { flex: none; display: flex; align-items: center; height: 27px; border-top: 1px solid #fff; }
.toolbar:not(.second) { border-bottom: 1px solid #d0d0d0; }
.second { border-bottom: 1px solid #a0a0a0; }
.grip { width: 3px; height: 19px; margin: 0 1px 0 3px; background: repeating-linear-gradient(#999 0 1px, #f0f0f0 1px 2px); }
.sep { width: 1px; height: 20px; margin: 0 3px 0 2px; background: #a0a0a0; }
.edge { width: 1px; height: 25px; margin-left: 1px; background: #a0a0a0; box-shadow: 1px 0 #fff; }
.tool { flex: none; position: relative; display: flex; align-items: center; justify-content: center; gap: 4px; width: 26px; height: 23px; margin: 0 1px; border: 1px solid transparent; font-size: 11px; }
.tool.on { border-color: #888 #fff #fff #888; background: #f8f8f8; }
.drop { width: 35px; justify-content: flex-start; padding-left: 2px; }
.drop::after { content: ""; margin-left: 4px; border: 3px solid transparent; border-top-color: #000; border-bottom: 0; }
.wide { width: auto; padding: 0 5px 0 6px; }
.wide.on { padding-left: 3px; }
.frame { font-size: 10px; color: #444; }
.right { display: flex; gap: 12px; margin-left: auto; padding-right: 2px; }
.chat { width: 22px; height: 16px; }

.main { flex: 1; min-height: 0; display: flex; gap: 2px; }
.dock { flex: none; display: flex; flex-direction: column; width: 271px; border: solid #a0a0a0; border-width: 0 1px 1px 0; }
.pane { display: flex; flex-direction: column; padding: 1px 3px 4px; }
.quotes { border-bottom: 1px solid #a0a0a0; }
.nav { flex: 1; min-height: 0; }
.caption { flex: none; display: flex; align-items: center; height: 14px; margin: 0 -2px 1px 0; }
.caption h2 { flex: 1; padding-left: 2px; font-size: 11px; color: #44546a; background: linear-gradient(90deg, #bfcddb, #d7e4f2); }
.caption button { width: 15px; font: bold 9px "DejaVu Sans", sans-serif; }
.box { display: flex; min-height: 0; border: 1px solid #888; border-width: 1px 0 0 1px; background: #fff; overflow: hidden; }
.quotes .box { flex: none; height: 309px; }
.nav .box { flex: 1; }
table { border-collapse: collapse; table-layout: fixed; }
.quotes table { width: 247px; }
.quotes th { height: 24px; padding: 0 5px; font-size: 12px; font-weight: normal; text-align: right; border: 1px solid #dcdfe2; border-width: 0 1px 1px 0; background: linear-gradient(#fff 45%, #f3f5f8 50%); }
.quotes th:first-child { width: 105px; text-align: left; }
.quotes th:nth-child(2) { width: 70px; }
.quotes td { height: 20px; padding: 0 4px; font-size: 12px; text-align: right; color: #00f; background: #f0fff0; border: 1px solid #c0c0c0; border-width: 0 1px 1px 0; }
.quotes td:last-child { border-right: 0; }
.quotes td:first-child { text-align: left; color: #000; }
.quotes td + td { font-size: 11px; }
.quotes .down td + td { color: #f00; }
.dir { width: 11px; height: 11px; margin-right: 5px; vertical-align: -1px; }
.scroll { flex: none; display: flex; flex-direction: column; align-items: center; justify-content: space-between; width: 16px; margin-left: auto; padding: 8px 0 6px; background: #f1f1f1; }
.scroll::before, .scroll::after { content: ""; flex: none; border: 3px solid transparent; border-top: 0; border-bottom: 4px solid #444; }
.scroll::after { border-top: 4px solid #444; border-bottom: 0; }
.thumb { flex: none; display: grid; width: 15px; height: 70px; margin: 6px 0 auto; border: 1px solid #999; border-radius: 2px; background: linear-gradient(90deg, #f5f5f5, #e0e0e0 50%, #cfcfcf); }
.thumb::after { content: ""; width: 7px; height: 8px; place-self: center; background: repeating-linear-gradient(#777 0 1px, #eee 1px 3px); }
.long { height: 219px; }
.tabs { flex: none; display: flex; height: 20px; border-top: 1px solid #000; padding-left: 3px; color: #6e6e6e; font-size: 12px; }
.tabs button { position: relative; padding: 0 10px; }
.tabs button:not(.on):not(.last)::after { content: ""; position: absolute; right: 0; top: 3px; height: 13px; border-right: 1px solid #666; }
.tabs .on { margin-top: -1px; color: #000; background: #fff; border: solid #000; border-width: 0 2px 2px; height: 20px; }
.nav .tabs, .quotes .tabs { padding-left: 2px; }
.quotes .tabs button, .nav .tabs button { padding: 0 9px; }

.nav ul { list-style: none; flex: 1; padding-top: 1px; font-size: 12px; }
.nav li { position: relative; display: flex; align-items: center; height: 18px; white-space: nowrap; padding-left: 6px; }
.nav li span { margin-left: 5px; }
.nav .l1 { padding-left: 9px; }
.nav .l2 { padding-left: 30px; }
.nav .l3 { padding-left: 69px; }
.pm { position: relative; display: block; width: 9px; height: 9px; margin-right: 7px; font: 9px/7px "DejaVu Sans", sans-serif; text-align: center; border: 1px solid #999; background: #fff; color: #336; z-index: 1; }
.l1 span { padding-left: 2px; }
.l2 > .ico:first-child { margin-left: 17px; }
.nav li:not(.l0)::before { content: ""; position: absolute; z-index: 0; top: 9px; left: 13px; width: 10px; border-top: 1px dotted #888; }
.nav .l2::before, .nav .l3::before { left: 34px; width: 11px; }
.nav .l3::before { left: 55px; }
.nav li:not(.l0)::after { content: ""; position: absolute; top: 0; bottom: 0; left: 13px; border-left: 1px dotted #888; }
.nav .l2::after, .nav .l3::after { width: 21px; border-right: 1px dotted #888; }

.charts { flex: 1; min-width: 0; display: flex; flex-direction: column; }
.chart { flex: 1; min-height: 0; display: grid; grid-template: 1fr 20px / 1fr 40px; padding: 3px 0 0 2px; background: #000; color: #fff; font: 9px/12px "DejaVu Sans Condensed", "DejaVu Sans", sans-serif; }
.plot { position: relative; border: 1px solid #fff; overflow: hidden; }
.canvas { display: block; width: 100%; height: 100%; }
.prices { width: 40px; height: 100%; fill: #fff; overflow: visible; }
.times { grid-column: 1 / 3; width: 100%; height: 20px; fill: #fff; }
.bid { fill: #000; }
.quote { position: absolute; left: 15px; top: 1px; }
.quote i { position: absolute; left: -12px; top: 5px; border: 4px solid transparent; border-top-color: #fff; border-bottom: 0; }
.ea { position: absolute; right: 4px; top: 3px; display: flex; gap: 1px; }
.info { position: absolute; left: 10px; top: 21px; line-height: 12px; }
.info h3 { height: 54px; padding-left: 3px; color: #ff8c00; font: 12px/18px "Liberation Sans", sans-serif; }
.info p { height: 12px; white-space: nowrap; }
.info .rule { width: 141px; height: 12px; margin-left: -3px; background: linear-gradient(#fff, #fff) 0 6px / 100% 1px no-repeat; }
.warning { position: absolute; left: 571px; top: 210px; font: 44px/48px "Liberation Sans", sans-serif; color: #f00; white-space: nowrap; }
.chart-tabs { height: 20px; margin-top: 2px; padding-left: 3px; font-size: 11px; border-bottom: 1px solid #fff; }
.chart-tabs button { padding: 0 12px; }
.arrows { display: flex; align-items: center; gap: 12px; margin-left: auto; padding-right: 4px; font-size: 8px; color: #888; }

.terminal { flex: none; display: flex; height: 217px; padding: 3px 0 5px; border-bottom: 1px solid #a0a0a0; }
.strip { flex: none; display: flex; flex-direction: column; width: 16px; padding-right: 2px; }
.strip button { height: 16px; font: bold 9px "DejaVu Sans", sans-serif; }
.strip span { flex: 1; writing-mode: vertical-rl; transform: rotate(180deg); padding-top: 2px; font-size: 11px; line-height: 14px; background: linear-gradient(#9cb4d0, #bcd2ea); }
.term-body { flex: 1; min-width: 0; display: flex; flex-direction: column; border-top: 1px solid #888; }
.term-list { flex: 1; overflow: hidden; background: #fff; }
.terminal table { width: 100%; font-size: 11px; }
.c0 { width: 139px; } .c1, .c8 { width: 237px; } .c2, .c5, .c6, .c7, .c9, .c10 { width: 107px; } .c3 { width: 86px; } .c4 { width: 107px; } .c11 { width: 118px; }
.terminal th { height: 24px; padding: 0 5px; font-weight: normal; text-align: right; border: 1px solid #dcdfe2; border-width: 0 1px 2px 0; background: linear-gradient(#fff 45%, #f3f5f8 50%); }
.terminal th svg { margin: 0 0 0 12px; }
.terminal th:first-child { text-align: left; }
.terminal td { height: 20px; padding: 0 3px; text-align: right; white-space: nowrap; border: 1px solid #c4c4c4; border-width: 0 1px 1px 0; }
.terminal td:first-child { text-align: left; }
.terminal td:last-child { padding-right: 10px; border-right: 0; }
.terminal td.flush { padding-right: 4px; }
.terminal tr:nth-child(even) td { background: #ebebeb; }
.terminal .open { border-right: 0; }
.terminal .hit { background: #ff9f9f; }
.terminal .sum td { background: #c8c8c8; font-weight: bold; border: 0; }
.sum i { display: inline-block; width: 7px; height: 7px; margin: 0 9px 0 4px; border: 1px solid #888; border-radius: 4px; background: #bbb; }
.doc { width: 14px; height: 16px; margin-right: 4px; vertical-align: -4px; }
.term-tabs { font-size: 11px; }
.term-tabs button { padding: 0 11px; }
.term-tabs sub { margin-left: 2px; font-size: 9px; line-height: 0; color: #f00; }

.status { flex: none; display: flex; height: 16px; padding-left: 3px; overflow: hidden; line-height: 26px; white-space: nowrap; border-top: 1px solid #fff; }
.help { flex: 1; }
.status span + span { margin-top: 3px; padding-left: 5px; line-height: 20px; border-left: 1px solid #a0a0a0; }
.w1 { width: 117px; } .w2 { width: 101px; } .w3 { width: 69px; }
.net { display: flex; gap: 3px; width: 145px; }

.taskbar { position: relative; flex: none; display: flex; align-items: center; height: 40px; padding-left: 7px; color: #fff; border-top: 1px solid #5d7186;
  background: linear-gradient(#b7d0ea 0, #7f9fbecc 12px, #33507255 17px, transparent 26px),
    linear-gradient(90deg, #167e86 0, #2a9ca0 180px, #5aa6b4 420px, #4f97b4 560px, #a7cdf0 640px, #b5d5f3 780px, #8da9b0 830px, #98a3a5 1030px, #585464 1060px, #6e96aa 1100px, #5d94a8 1240px, #1b5168 1260px, #17364f 1345px, #5d8fb0 1400px, #4e7fa0 1450px, #12283e 1480px, #12273c 1700px, #1a3548 1920px); }
.leaf { position: absolute; left: 800px; top: 12px; width: 190px; height: 26px; filter: blur(5px); background: linear-gradient(90deg, transparent, #6d9465 20%, #9fb0a8 35%, #54953f 55%, #7a937a 70%, #334a48 80%, #8aa184 90%, transparent); }
.start { width: 38px; height: 38px; margin-right: 13px; }
.task { display: grid; place-items: center; width: 60px; height: 38px; margin-right: 2px; border: 1px solid transparent; }
.task svg { filter: drop-shadow(0 1px 1px #0005); }
.run { border-color: #2c4450; border-radius: 3px; background: linear-gradient(135deg, #ffffffaa, #ffffff44 50%, #ffffff22); box-shadow: inset 0 0 0 1px #ffffff88; }
.active { background: linear-gradient(135deg, #fffffff0, #ffffffa0 50%, #ffffff66); }
.tray { display: flex; align-items: center; gap: 9px; height: 100%; margin-left: auto; font-size: 11px; }
.lang { margin: -6px 6px 0 0; }
.clock { display: flex; flex-direction: column; width: 60px; margin-left: 4px; text-align: center; line-height: 17px; }
.peek { width: 14px; height: 40px; border: 1px solid #c8d6e099; background: linear-gradient(135deg, #ffffff66, #ffffff11); }
</style>
